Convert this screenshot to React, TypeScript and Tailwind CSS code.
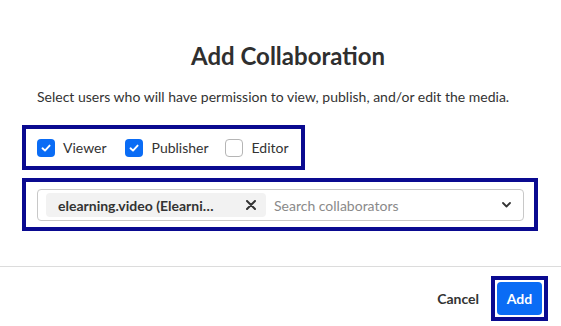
import React from "react";

function Check({ checked }: { checked: boolean }) {
  if (checked) {
    return (
      <span className="flex h-[18px] w-[18px] shrink-0 items-center justify-center rounded-[4px] bg-[#0a6cf5]">
        <svg width="12" height="12" viewBox="0 0 12 12" fill="none">
          <path d="M2.5 6.3 L5 8.6 L9.6 3.6" stroke="white" strokeWidth="1.9" strokeLinecap="round" strokeLinejoin="round" />
        </svg>
      </span>
    );
  }
  return <span className="block h-[18px] w-[18px] shrink-0 rounded-[4px] border border-[#b5b5b5] bg-white" />;
}

export default function App() {
  return (
    <div
      className="flex h-[326px] w-[561px] flex-col bg-white text-[#333333]"
      style={{ fontFamily: "Lato, 'Open Sans', sans-serif" }}
    >
      <div className="mt-[41px] flex justify-center pl-[15px] text-[24px] font-bold leading-[29px] text-[#2f2f2f]">
        Add Collaboration
      </div>
      <div className="ml-[37px] mt-[17px] text-[14px] leading-[20px] text-[#333333]">
        Select users who will have permission to view, publish, and/or edit the media.
      </div>
      <div className="ml-[22px] mt-[18px] flex h-[45px] w-[283px] items-center border-4 border-[#0a0a90] pl-[11px] text-[14px]">
        <Check checked />
        <span className="ml-[8px]">Viewer</span>
        <span className="ml-[18px] flex"><Check checked /></span>
        <span className="ml-[9px]">Publisher</span>
        <span className="ml-[16px] flex"><Check checked={false} /></span>
        <span className="ml-[9px]">Editor</span>
      </div>
      <div className="ml-[22px] mt-[8px] h-[53px] w-[516px] border-4 border-[#0a0a90] pl-[11px] pr-[10px] pt-[7px]">
        <div className="flex h-[32px] items-center rounded-[4px] border border-[#c8c8c8] pl-[8px] pr-[12px]">
          <div className="flex h-[24px] w-[220px] items-center rounded-[4px] bg-[#f2f2f2] pl-[12px] pr-[10px]">
            <span className="w-[160px] truncate text-[14px] font-bold text-[#333333]">elearning.video (Elearning Video)</span>
            <span className="ml-auto">
              <svg width="10" height="10" viewBox="0 0 10 10">
                <path d="M1 1 L9 9 M9 1 L1 9" stroke="#333" strokeWidth="2" strokeLinecap="round" />
              </svg>
            </span>
          </div>
          <span className="ml-[8px] text-[14px] text-[#8a8a8a]">Search collaborators</span>
          <span className="ml-auto">
            <svg width="9" height="6" viewBox="0 0 9 6">
              <path d="M1 1 L4.5 4.5 L8 1" stroke="#333" strokeWidth="1.8" fill="none" strokeLinecap="round" strokeLinejoin="round" />
            </svg>
          </span>
        </div>
      </div>
      <div className="mt-[35px] h-px w-full bg-[#dcdcdc]" />
      <div className="mt-[9px] flex items-center justify-end pr-[13px]">
        <span className="mr-[12px] text-[14px] font-bold text-[#333333]">Cancel</span>
        <div className="border-4 border-[#0a0a90] p-[2px]">
          <div className="flex h-[33px] w-[45px] items-center justify-center rounded-[4px] bg-[#0a6cf5] text-[14px] font-bold text-white">
            Add
          </div>
        </div>
      </div>
    </div>
  );
}
